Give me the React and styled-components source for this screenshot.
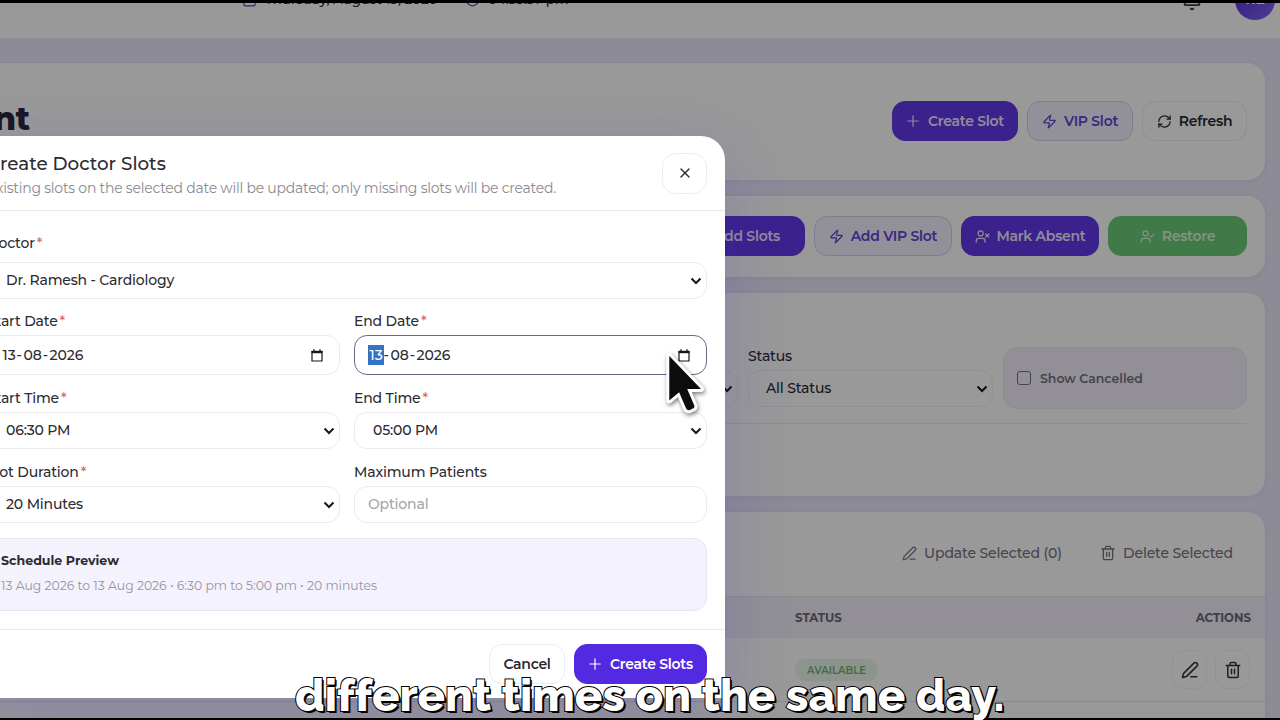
import styled, { createGlobalStyle } from "styled-components"
import { Bell, Calendar, Clock, PenLine, Plus, RefreshCw, UserCheck, UserX, X, Zap } from "lucide-react"

export default function App() {
  return (
    <>
      <GlobalStyle />
      <Page>
        <TopBar />
        <Main>
          <PageHead />
          <QuickActions />
          <Filters />
          <SlotTable />
        </Main>
        <Overlay>
          <CreateSlotsModal />
        </Overlay>
        <Pointer />
        <Bar $top />
        <Bar />
        <Caption>different times on the same day.</Caption>
      </Page>
    </>
  )
}

function TopBar() {
  return (
    <Header>
      <HeaderInfo $w={223}>
        <Calendar size={15} color="#5a35d6" />
        <span>Thursday, August 13, 2026</span>
      </HeaderInfo>
      <HeaderInfo>
        <Clock size={15} color="#5a35d6" />
        <span>04:35:37 pm</span>
      </HeaderInfo>
      <HeaderRight>
        <Bell size={20} color="#3c3848" />
        <Avatar>RE</Avatar>
      </HeaderRight>
    </Header>
  )
}

function PageHead() {
  return (
    <Card $h={117}>
      <HeadRow>
        <Title>Slot Management</Title>
        <Actions>
          <Button $w={126} $kind="primary">
            <PlusIcon />
            Create Slot
          </Button>
          <Button $w={106} $kind="vip">
            <Zap size={15} />
            VIP Slot
          </Button>
          <Button $w={105}>
            <RefreshCw size={15} />
            Refresh
          </Button>
        </Actions>
      </HeadRow>
    </Card>
  )
}

function QuickActions() {
  return (
    <Card $h={81}>
      <QuickRow>
        <Button $w={138} $kind="primary">
          <PlusIcon />
          Add Slots
        </Button>
        <Button $w={138} $kind="vip">
          <Zap size={15} />
          Add VIP Slot
        </Button>
        <Button $w={138} $kind="primary">
          <UserX size={15} />
          Mark Absent
        </Button>
        <Button $w={139} $kind="success">
          <UserCheck size={15} />
          Restore
        </Button>
      </QuickRow>
    </Card>
  )
}

function Filters() {
  return (
    <Card $h={203}>
      <FilterRow>
        <Field $top={1}>
          <Label>Doctor</Label>
          <Control $soft>
            All Doctors
            <Chevron />
          </Control>
        </Field>
        <Field $top={1}>
          <Label>Status</Label>
          <Control $soft>
            All Status
            <Chevron />
          </Control>
        </Field>
        <CheckPanel>
          <CheckBox />
          Show Cancelled
        </CheckPanel>
      </FilterRow>
    </Card>
  )
}

function SlotTable() {
  return (
    <Card $h={240}>
      <TableTools>
        <Button $w={190} $kind="muted">
          <PenLine size={15} />
          Update Selected (0)
        </Button>
        <Button $w={161} $kind="muted">
          <TrashIcon size={16} />
          Delete Selected
        </Button>
      </TableTools>
      <TableHead>
        <span>STATUS</span>
        <span>ACTIONS</span>
      </TableHead>
      <TableRow>
        <Badge>AVAILABLE</Badge>
        <RowActions>
          <IconButton>
            <PenLine size={18} />
          </IconButton>
          <IconButton>
            <TrashIcon size={18} />
          </IconButton>
        </RowActions>
      </TableRow>
    </Card>
  )
}

function CreateSlotsModal() {
  return (
    <Modal>
      <ModalHead>
        <div>
          <ModalTitle>Create Doctor Slots</ModalTitle>
          <ModalSub>Existing slots on the selected date will be updated; only missing slots will be created.</ModalSub>
        </div>
        <Close>
          <X size={16} />
        </Close>
      </ModalHead>
      <ModalBody>
        <DoctorField>
          <Label $mb={10}>Doctor<Required>*</Required></Label>
          <Control>
            Dr. Ramesh - Cardiology
            <Chevron />
          </Control>
        </DoctorField>
        <Field>
          <Label>Start Date<Required>*</Required></Label>
          <Control $date>
            <DateValue />
            <DateIcon />
          </Control>
        </Field>
        <Field>
          <Label>End Date<Required>*</Required></Label>
          <Control $date $focus>
            <DateValue selected />
            <DateIcon />
          </Control>
        </Field>
        <Field>
          <Label>Start Time<Required>*</Required></Label>
          <Control>
            06:30 PM
            <Chevron />
          </Control>
        </Field>
        <Field>
          <Label>End Time<Required>*</Required></Label>
          <Control>
            05:00 PM
            <Chevron />
          </Control>
        </Field>
        <Field>
          <Label>Slot Duration<Required>*</Required></Label>
          <Control>
            20 Minutes
            <Chevron />
          </Control>
        </Field>
        <Field>
          <Label>Maximum Patients</Label>
          <Control $empty>Optional</Control>
        </Field>
        <Preview>
          <PreviewTitle>Schedule Preview</PreviewTitle>
          <PreviewText>13 Aug 2026 to 13 Aug 2026 • 6:30 pm to 5:00 pm • 20 minutes</PreviewText>
        </Preview>
      </ModalBody>
      <ModalFoot>
        <Button $w={76}>Cancel</Button>
        <Button $w={133} $kind="solid">
          <PlusIcon />
          Create Slots
        </Button>
      </ModalFoot>
    </Modal>
  )
}

function DateValue({ selected }) {
  return (
    <DateText>
      <Segment $on={selected}>13</Segment>-<Segment>08</Segment>-<Segment>2026</Segment>
    </DateText>
  )
}

function Chevron() {
  return (
    <svg width="12" height="8" viewBox="0 0 12 8" fill="none" stroke="#17151f" strokeWidth="2">
      <path d="M1.5 1.5 6 6l4.5-4.5" />
    </svg>
  )
}

function DateIcon() {
  return (
    <svg width="12" height="13" viewBox="0 0 12 13" fill="none" stroke="#17151f">
      <path d="M1 2.5h10V12H1z" strokeWidth="1.2" />
      <path d="M.5 3h11" strokeWidth="2.4" />
      <path d="M3 .3v2M9 .3v2" strokeWidth="1.3" />
    </svg>
  )
}

function TrashIcon({ size }) {
  return (
    <svg width={size} height={size} viewBox="0 0 24 24" fill="none" stroke="currentColor" strokeWidth="2" strokeLinecap="round" strokeLinejoin="round">
      <path d="M3 6h18M19 6v14a2 2 0 0 1-2 2H7a2 2 0 0 1-2-2V6M8 6V4a2 2 0 0 1 2-2h4a2 2 0 0 1 2 2v2M10 11v6M14 11v6" />
    </svg>
  )
}

function Pointer() {
  return (
    <Cursor width="48" height="70" viewBox="0 0 48 70">
      <path
        d="M9.300 9v44.500l9.800-8.200 7 16.200q1.200 2.500 3.800 1.400l3-1.300q2.300-1.200 1.200-3.600L27.200 42H41z"
        fill="#0c0c0c"
        stroke="#fff"
        strokeWidth="6"
        strokeLinejoin="round"
        paintOrder="stroke"
      />
    </Cursor>
  )
}

const GlobalStyle = createGlobalStyle`
  * {
    box-sizing: border-box;
  }
  body {
    margin: 0;
    background: #000;
  }
`

const Page = styled.div`
  position: relative;
  width: 1280px;
  height: 720px;
  overflow: hidden;
  background: #ece8fa;
  color: #2c2b32;
  font-family: 'Montserrat', 'Inter', sans-serif;
  font-size: 14px;
  font-weight: 500;
  line-height: 17px;
  letter-spacing: -0.16px;
  white-space: nowrap;
`

const Header = styled.header`
  display: flex;
  height: 39px;
  padding: 0 5px 0 242px;
  background: #fff;
  border-bottom: 1px solid #ece9f3;
`

const HeaderInfo = styled.div`
  display: flex;
  align-items: center;
  gap: 8px;
  width: ${props => props.$w ? props.$w + 'px' : 'auto'};
  height: 17px;
  margin-top: -9px;
  font-size: 13.25px;
  letter-spacing: 0;
`

const HeaderRight = styled.div`
  display: flex;
  align-items: center;
  gap: 33px;
  height: 40px;
  margin-top: -20px;
  margin-left: auto;

  svg {
    margin-top: 1px;
  }
`

const Avatar = styled.div`
  display: flex;
  align-items: center;
  justify-content: center;
  width: 40px;
  height: 40px;
  padding-bottom: 2px;
  border-radius: 50%;
  background: linear-gradient(135deg, #4f28d9, #8667f5);
  color: #fff;
  font-weight: 700;
`

const Main = styled.main`
  display: flex;
  flex-direction: column;
  gap: 16px;
  margin-left: -30px;
  padding: 24px 15px 0 0;
`

const Card = styled.section`
  flex: none;
  height: ${props => props.$h}px;
  border-radius: 18px;
  background: #fff;
  box-shadow: 0 1px 6px rgba(80, 60, 150, 0.08);
  overflow: hidden;
`

const HeadRow = styled.div`
  display: flex;
  justify-content: space-between;
  padding: 38px 18px 0 0;
`

const Title = styled.h1`
  display: flex;
  justify-content: flex-end;
  width: 60px;
  margin: 0;
  color: #2b2738;
  font-size: 32px;
  font-weight: 800;
  line-height: 36px;
`

const Actions = styled.div`
  display: flex;
  gap: 9px;
`

const QuickRow = styled.div`
  display: flex;
  justify-content: flex-end;
  gap: 9px;
  padding: 20px 18px 0;
`

const kinds = {
  primary: 'background: #6237ea; border-color: #6237ea; color: #efeaff;',
  solid: 'background: #5429e2; border-color: #5429e2; color: #fff;',
  vip: 'background: #f3f0fd; border-color: #d6d0ee; color: #6243d6;',
  success: 'background: #6acb79; border-color: #6acb79; color: #d9f5dd;',
  muted: 'border-color: #faf9fc; color: #77747f; font-weight: 500; letter-spacing: -0.14px;',
}

const Button = styled.button`
  display: flex;
  align-items: center;
  justify-content: center;
  gap: 7px;
  width: ${props => props.$w}px;
  height: 40px;
  padding: 0;
  border: 1px solid #eeecf4;
  border-radius: 13px;
  background: #fff;
  color: #2a2733;
  font-family: inherit;
  font-size: 14px;
  font-weight: 600;
  letter-spacing: -0.27px;
  white-space: nowrap;
  ${props => kinds[props.$kind]}
`

const PlusIcon = styled(Plus).attrs({ size: 18, strokeWidth: 1.6 })`
  margin: 0 -1px 0 -2px;
`

const FilterRow = styled.div`
  display: grid;
  grid-template-columns: 245px 245px 244px;
  justify-content: end;
  column-gap: 10px;
  height: 77px;
  margin: 54px 18px 0;
  border-bottom: 1px solid #ebe9f1;
`

const Field = styled.div`
  padding-top: ${props => props.$top || 0}px;
`

const DoctorField = styled(Field)`
  grid-column: 1 / -1;
  margin-bottom: -1px;
`

const Label = styled.div`
  margin-bottom: ${props => props.$mb || 5}px;
`

const Required = styled.span`
  margin-left: 2px;
  color: #dc6560;
`

const Control = styled.div`
  display: flex;
  align-items: center;
  justify-content: space-between;
  height: ${props => props.$date ? 40 : 37}px;
  padding: ${props => props.$date ? '0 16px 0 13px' : '0 4px 0 18px'};
  border: 1px solid ${props => props.$focus ? '#6b6786' : '#ebeaef'};
  border-radius: 13px;
  background: #fff;
  ${props => props.$soft && 'border-color: #f2f1f6; padding-left: 17px;'}
  ${props => props.$empty && 'padding-left: 13px; color: #a5a4ab;'}
`

const DateText = styled.span`
  letter-spacing: -0.05px;
`

const Segment = styled.span`
  padding: 1px 1px 1px 1.5px;
  background: ${props => props.$on ? '#3273c4' : 'transparent'};
  color: ${props => props.$on ? '#fff' : 'inherit'};
`

const CheckPanel = styled.div`
  display: flex;
  align-items: center;
  gap: 9px;
  height: 62px;
  padding-left: 13px;
  border: 1px solid #ebe8f4;
  border-radius: 14px;
  background: #f3f1fa;
  color: #74717f;
  font-size: 12.5px;
  font-weight: 600;
  letter-spacing: 0;
`

const CheckBox = styled.span`
  width: 14px;
  height: 14px;
  border: 1px solid #77747f;
  border-radius: 3px;
`

const TableTools = styled.div`
  display: flex;
  justify-content: flex-end;
  gap: 9px;
  height: 84px;
  padding: 21px 18px 0;
`

const TableHead = styled.div`
  display: flex;
  align-items: center;
  justify-content: space-between;
  height: 42px;
  padding: 1px 14px 0 825px;
  border-top: 1px solid #e8e6f0;
  background: #f3f1fa;
  color: #6b6876;
  font-size: 11.75px;
  font-weight: 700;
  letter-spacing: 0;
`

const TableRow = styled.div`
  display: flex;
  align-items: center;
  justify-content: space-between;
  height: 64px;
  padding: 0 15px 0 825px;
  border-bottom: 1px solid #e8e6f0;
`

const Badge = styled.span`
  padding: 3px 12px 2px;
  border-radius: 12px;
  background: #e9f7eb;
  color: #69b475;
  font-size: 10.1px;
  font-weight: 600;
  letter-spacing: 0;
`

const RowActions = styled.div`
  display: flex;
  gap: 8px;
`

const IconButton = styled.span`
  display: flex;
  align-items: center;
  justify-content: center;
  width: 35px;
  height: 39px;
  border: 1px solid #f4f3f8;
  border-radius: 12px;
  color: #34313e;
`

const Overlay = styled.div`
  position: absolute;
  inset: 0;
  display: flex;
  align-items: flex-start;
  padding-top: 136px;
  background: rgba(0, 0, 0, 0.4);
`

const Modal = styled.div`
  flex: none;
  width: 756px;
  height: 562px;
  margin-left: -31px;
  border-radius: 24px 24px 0 0;
  background: #fff;
  box-shadow: 0 20px 70px rgba(70, 50, 190, 0.2);
`

const ModalHead = styled.div`
  display: flex;
  justify-content: space-between;
  height: 75px;
  padding: 17px 18px 0;
  border-bottom: 1px solid #e9e8ed;
`

const ModalTitle = styled.h2`
  margin: 0;
  font-size: 18.3px;
  font-weight: 500;
  line-height: 21px;
  letter-spacing: 0;
`

const ModalSub = styled.p`
  margin: 6px 0 0;
  color: #8b8991;
  font-weight: 400;
  letter-spacing: -0.24px;
`

const Close = styled.span`
  display: flex;
  align-items: center;
  justify-content: center;
  width: 45px;
  height: 41px;
  padding-bottom: 1px;
  border: 1px solid #eeedf2;
  border-radius: 14px;
`

const ModalBody = styled.div`
  display: grid;
  grid-template-columns: 353px 353px;
  gap: 15px 14px;
  padding: 24px 18px 18px;
`

const Preview = styled.div`
  grid-column: 1 / -1;
  height: 73px;
  padding: 13px 13px;
  border: 1px solid #e9e6f3;
  border-radius: 13px;
  background: #f4f2fc;
  letter-spacing: 0;
`

const PreviewTitle = styled.div`
  font-size: 12.6px;
  font-weight: 700;
`

const PreviewText = styled.div`
  margin-top: 8px;
  color: #9794a3;
  font-size: 12.4px;
  font-weight: 400;
`

const ModalFoot = styled.div`
  display: flex;
  justify-content: flex-end;
  gap: 9px;
  padding: 14px 18px 0;
  border-top: 1px solid #e9e8ed;
`

const Cursor = styled.svg`
  position: absolute;
  top: 347px;
  left: 660px;
  filter: drop-shadow(1px 2px 2px rgba(0, 0, 0, 0.5));
`

const Bar = styled.div`
  position: absolute;
  left: 0;
  right: 0;
  ${props => props.$top ? 'top: 0; height: 3px;' : 'bottom: 0; height: 2px;'}
  background: #000;
`

const Caption = styled.div`
  position: absolute;
  left: 295px;
  bottom: -3px;
  color: #fff;
  font-family: 'Raleway', 'Open Sans', sans-serif;
  font-size: 45.5px;
  font-weight: 800;
  font-variant-ligatures: none;
  line-height: 56px;
  letter-spacing: 0;
  -webkit-text-stroke: 2px #000;
  paint-order: stroke fill;
  text-shadow: 1px 1px 0 #000, 2px 2px 0 #000;
`
